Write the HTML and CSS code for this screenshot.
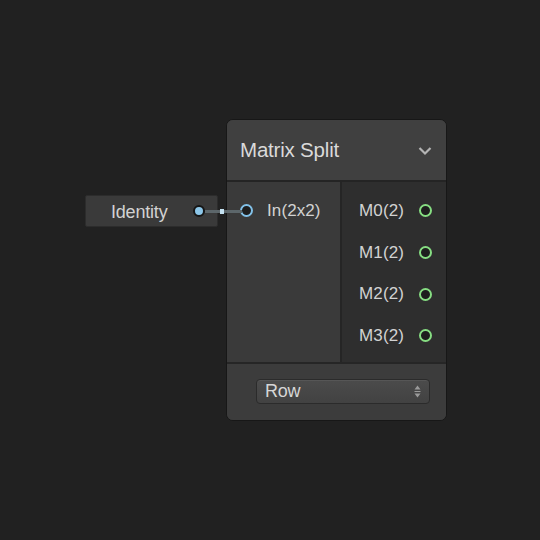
FILE: index.html
```html
<!DOCTYPE html>
<html>
<head>
<meta charset="utf-8">
<link rel="stylesheet" href="styles.css">
</head>
<body>
<div class="canvas">
  <div class="edge"><span class="edge-knot"></span></div>

  <div class="mini-node">
    <span class="mini-label">Identity</span>
    <span class="mini-dot"></span>
  </div>

  <div class="node">
    <div class="node-header">
      <span class="node-title">Matrix Split</span>
      <svg class="chevron" width="14" height="10" viewBox="0 0 14 10"><polyline points="1.5,2 7,7.5 12.5,2" fill="none" stroke="#b4b4b4" stroke-width="2.2"/></svg>
    </div>
    <div class="node-ports">
      <div class="inputs">
        <div class="port-row in-row"><span class="port in-port"></span><span class="port-label">In(2x2)</span></div>
      </div>
      <div class="outputs">
        <div class="port-row out-row"><span class="port-label">M0(2)</span><span class="port out-port"></span></div>
        <div class="port-row out-row"><span class="port-label">M1(2)</span><span class="port out-port"></span></div>
        <div class="port-row out-row"><span class="port-label">M2(2)</span><span class="port out-port"></span></div>
        <div class="port-row out-row"><span class="port-label">M3(2)</span><span class="port out-port"></span></div>
      </div>
    </div>
    <div class="node-footer">
      <div class="dropdown">
        <span class="dropdown-value">Row</span>
        <svg class="updown" width="7" height="13" viewBox="0 0 7 13"><polygon points="3.5,0.5 6.5,4.5 0.5,4.5" fill="#9a9a9a"/><rect x="0.5" y="6" width="6" height="1" fill="#9a9a9a"/><polygon points="0.5,8.5 6.5,8.5 3.5,12.5" fill="#9a9a9a"/></svg>
      </div>
    </div>
  </div>
</div>
</body>
</html>
```

FILE: styles.css
```css
html, body {
  margin: 0;
  padding: 0;
  background: #212121;
}
body {
  font-family: "Liberation Sans", Arial, sans-serif;
  color: #d4d4d4;
}
.canvas {
  position: relative;
  width: 540px;
  height: 540px;
  background: #212121;
  overflow: hidden;
}

/* edge */
.edge {
  position: absolute;
  left: 205px;
  top: 210px;
  width: 37px;
  height: 3px;
  background: #5c666a;
  z-index: 3;
}
.edge-knot {
  position: absolute;
  left: 15px;
  top: -1px;
  width: 4px;
  height: 5px;
  background: #c4e2f2;
}

/* Identity node */
.mini-node {
  position: absolute;
  left: 85px;
  top: 195px;
  width: 133px;
  height: 32px;
  box-sizing: border-box;
  background: #3a3a3a;
  border: 1px solid #2c2c2c;
  border-radius: 2px;
  display: flex;
  align-items: center;
}
.mini-label {
  margin-left: 25px;
  margin-top: 2px;
  font-size: 18px;
  color: #d2d2d2;
  letter-spacing: -0.2px;
}
.mini-dot {
  margin-left: auto;
  margin-right: 12px;
  width: 8px;
  height: 8px;
  border-radius: 50%;
  background: #8cc6e8;
  border: 2px solid #151515;
}

/* Main node */
.node {
  position: absolute;
  left: 226px;
  top: 119px;
  width: 221px;
  height: 302px;
  box-sizing: border-box;
  border: 1px solid #171717;
  border-radius: 7px;
  overflow: hidden;
  display: flex;
  flex-direction: column;
  background: #3c3c3c;
}
.node-header {
  height: 60px;
  flex: none;
  background: #404040;
  border-bottom: 2px solid #242424;
  display: flex;
  align-items: center;
  padding: 0 14px 0 13px;
}
.node-title {
  font-size: 20.5px;
  color: #dadada;
  letter-spacing: -0.2px;
}
.chevron {
  margin-left: auto;
  margin-top: 2px;
}
.node-ports {
  height: 180px;
  flex: none;
  display: flex;
  border-bottom: 2px solid #262626;
}
.inputs {
  width: 115px;
  background: #3a3a3a;
  border-right: 2px solid #252525;
  padding-top: 8px;
  box-sizing: border-box;
}
.outputs {
  flex: 1;
  background: #2e2e2e;
  padding-top: 8px;
}
.port-row {
  height: 41.7px;
  display: flex;
  align-items: center;
}
.in-row {
  padding-left: 13px;
}
.out-row {
  justify-content: flex-end;
  padding-right: 14px;
}
.port-label {
  font-size: 17px;
  color: #d2d2d2;
  letter-spacing: 0.1px;
}
.port {
  width: 9px;
  height: 9px;
  border-radius: 50%;
  background: #1e1e1e;
  flex: none;
}
.in-port {
  border: 2px solid #82c1e8;
  margin-right: 14px;
}
.out-port {
  border: 2px solid #86dd82;
  margin-left: 15px;
}
.node-footer {
  flex: 1;
  background: #3c3c3c;
  padding: 15px 0 0 29px;
}
.dropdown {
  width: 174px;
  height: 25px;
  box-sizing: border-box;
  border: 1px solid #2b2b2b;
  border-radius: 4px;
  background: linear-gradient(#4b4b4b, #424242);
  box-shadow: inset 0 1px 0 #565656;
  display: flex;
  align-items: center;
  padding: 0 8px 0 8px;
}
.dropdown-value {
  font-size: 18px;
  color: #d6d6d6;
  letter-spacing: -0.2px;
}
.updown {
  margin-left: auto;
  margin-right: 0;
}
```
